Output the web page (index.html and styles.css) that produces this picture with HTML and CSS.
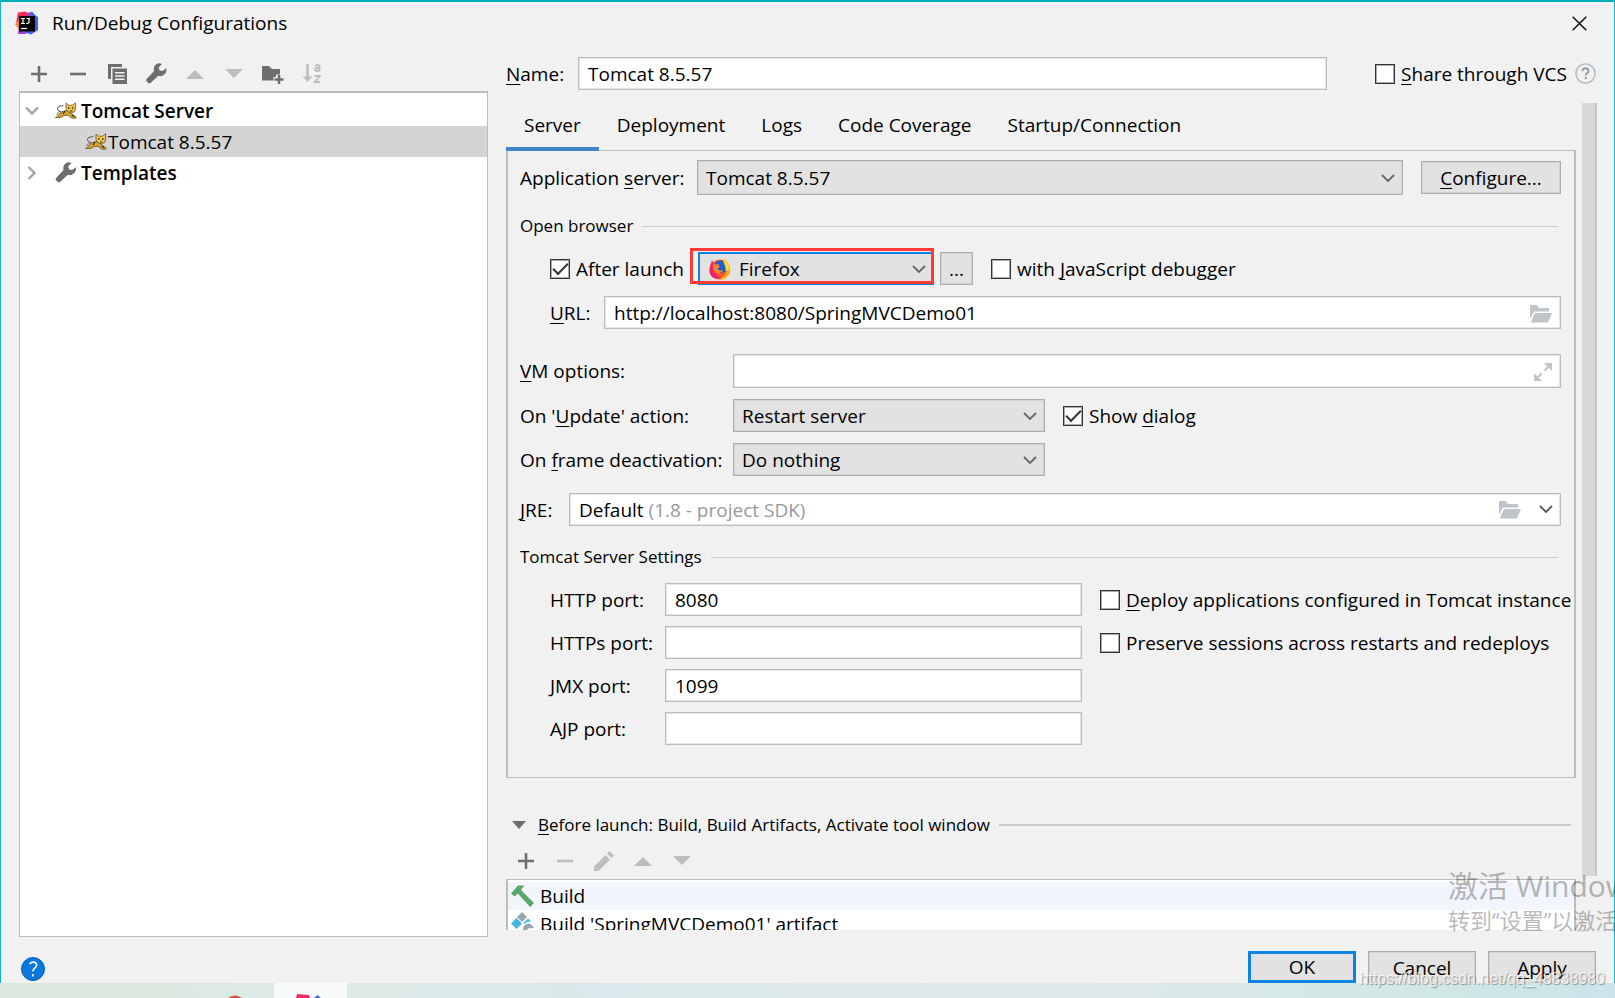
FILE: index.html
```
<!DOCTYPE html>
<html lang="en">
<head>
<meta charset="utf-8">
<title>Run/Debug Configurations</title>
<link rel="stylesheet" href="styles.css">
</head>
<body>
<svg class="defs" aria-hidden="true">
  <symbol id="plus" viewBox="0 0 16 16"><path d="M8 0v16M0 8h16" stroke="currentColor" stroke-width="2.600" fill="none"/></symbol>
  <symbol id="minus" viewBox="0 0 16 16"><path d="M0 8h16" stroke="currentColor" stroke-width="2.600" fill="none"/></symbol>
  <symbol id="up" viewBox="0 0 18 18"><path d="M9 5l9 9H0z" fill="currentColor"/></symbol>
  <symbol id="down" viewBox="0 0 18 18"><path d="M0 4h18l-9 9z" fill="currentColor"/></symbol>
  <symbol id="wrench" viewBox="0 0 21 21"><path d="M20.300 5.200L16.600 8l-3-.6-.9-3L15.900.900C12.700-.6 9.200 1 8.100 4.200c-.5 1.400-.4 2.700 0 3.900L.6 15.900c-.7.7-.7 1.600 0 2.300l1.700 1.800c.7.7 1.500.6 2.200 0l7.900-7.200c1.300.5 2.800.4 4.100-.1 3-1.300 4.700-4.500 3.800-7.500z" fill="currentColor"/></symbol>
  <symbol id="chev" viewBox="0 0 14 9"><path d="M1 1l6 6 6-6" stroke="currentColor" stroke-width="1.800" fill="none"/></symbol>
  <symbol id="folder" viewBox="0 0 22 18"><path d="M0 0h7l2 3h10v3.500H4L0 13.500z" fill="currentColor"/><path d="M4.800 8H22l-4 9.500H.8z" fill="currentColor"/></symbol>
  <symbol id="cat" viewBox="0 0 22 17">
    <path d="M.5 15.500c2-.5 3-3 5.500-5.500l5-1.500 4 1 1.500 2.500 4.500 3v1.200h-4l-4-3-4 .3-3 2H.5z" fill="#d2a33a" stroke="#5c430f" stroke-width=".7"/>
    <path d="M11 1l2.500 2.200h4L20.500.8l.2 5.200-1 3.500-3 1.500-4-1.500-1.700-3z" fill="#edc65a" stroke="#5c430f" stroke-width=".7"/>
    <path d="M6 9.500C1.500 8.500 2 5.500 4 4.500 6 3.500 8 4.500 8.500 2.800" fill="none" stroke="#4a4a4a" stroke-width="1"/>
    <path d="M13 5.500l1.500 1M18.500 5.500l-1.500 1M15 9h2.500M8 12l2-3M17 13l2 1.500" stroke="#33240a" stroke-width="1.200"/>
    <path d="M4.500 9L1.500 13" stroke="#555" stroke-width=".8"/>
  </symbol>
</svg>

<main class="dialog">
  <header class="titlebar">
    <svg class="logo" viewBox="0 0 24 24">
      <path d="M3 1.500L11 .5l3 4-4 8-9 1 1-7z" fill="#fb2a5c"/>
      <path d="M0 13l5-5 6 8-6 4z" fill="#fb8a1e"/>
      <path d="M3 23l1-9 9 3-2 6z" fill="#a73be0"/>
      <path d="M14 3l3-2.500L20 4l3 2v13l-7 4.500-6-2z" fill="#3f62e8"/>
      <path d="M12 2l4-1 2 4-5 2z" fill="#8950c8"/>
      <rect x="4" y="5" width="16" height="15.500" fill="#050505"/>
      <path d="M6 7.500h4M8 7.500v5M6 12.500h4M11.500 7.500H15M14 7.500v3.500q0 1.500-2.700 1.500" stroke="#fff" stroke-width="1.200" fill="none"/>
      <path d="M6 17.500h6" stroke="#fff" stroke-width="1.200"/>
    </svg>
    <h1>Run/Debug Configurations</h1>
    <button class="icon-btn close" aria-label="Close"><svg width="15" height="15" viewBox="0 0 15 15"><path d="M.7.7l13.600 13.600M14.300.7L.7 14.300" stroke="#111" stroke-width="1.500"/></svg></button>
  </header>

  <div class="content">
    <section class="left">
      <div class="toolbar">
        <button class="icon-btn" aria-label="Add"><svg width="16" height="16"><use href="#plus"/></svg></button>
        <button class="icon-btn" aria-label="Remove"><svg width="16" height="16"><use href="#minus"/></svg></button>
        <button class="icon-btn" aria-label="Copy"><svg width="19" height="20" viewBox="0 0 19 20"><path d="M0 0h14v3H3v12H0z" fill="currentColor"/><path d="M4.500 4.500H19V20H4.500zM7 8v1.500h9.500V8zm0 3.200v1.500h9.500v-1.500zm0 3.200v1.500h9.500v-1.500z" fill="currentColor" fill-rule="evenodd"/></svg></button>
        <button class="icon-btn" aria-label="Edit templates"><svg width="21" height="21"><use href="#wrench"/></svg></button>
        <button class="icon-btn off" aria-label="Move up"><svg width="18" height="18"><use href="#up"/></svg></button>
        <button class="icon-btn off" aria-label="Move down"><svg width="18" height="18"><use href="#down"/></svg></button>
        <button class="icon-btn" aria-label="New folder"><svg width="22" height="20" viewBox="0 0 22 20"><path d="M0 2h7l3 3h8v5.500h-4V13h-2.500v3.500H0z" fill="currentColor"/><path d="M17 11v9M12.500 15.500h9" stroke="currentColor" stroke-width="2.600"/></svg></button>
        <button class="icon-btn off" aria-label="Sort configurations"><svg width="20" height="21" viewBox="0 0 20 21"><path d="M.5 13.500h10l-5 5.500z" fill="currentColor"/><path d="M5.500 1v14" stroke="currentColor" stroke-width="2.600"/><path d="M13 2.800q4.500-2 4.500 1V8.500M17.500 5h-2.500q-2 0-2 1.500t2 1.500q2.500 0 2.500-2M12.800 13h5l-5 6h5.400" fill="none" stroke="currentColor" stroke-width="1.800"/></svg></button>
      </div>
      <ul class="tree">
        <li class="node"><svg class="arrow" width="14" height="10" viewBox="0 0 14 10"><path d="M1 1.500l6 6 6-6" stroke="currentColor" stroke-width="2.400" fill="none"/></svg><svg width="22" height="17"><use href="#cat"/></svg><b>Tomcat Server</b></li>
        <li class="node child selected"><svg width="22" height="17"><use href="#cat"/></svg><span>Tomcat 8.5.57</span></li>
        <li class="node"><svg class="arrow" width="10" height="14" viewBox="0 0 10 14"><path d="M1.500 1l6 6-6 6" stroke="currentColor" stroke-width="2.400" fill="none"/></svg><svg class="gray" width="22" height="21"><use href="#wrench"/></svg><b>Templates</b></li>
      </ul>
    </section>

    <section class="right">
      <div class="name-row">
        <label for="name"><u>N</u>ame:</label>
        <input id="name" class="field" type="text" value="Tomcat 8.5.57">
        <label class="check"><input type="checkbox"><span><u>S</u>hare through VCS</span></label>
        <button class="icon-btn hint" aria-label="About sharing"><svg width="21" height="21" viewBox="0 0 21 21"><circle cx="10.500" cy="10.500" r="9.600" fill="none" stroke="#aeb6bd" stroke-width="1.400"/><path d="M7.500 8.300q0-3 3-3t3 2.600c0 2-2.800 2.300-2.800 4.600M10.700 14v2.200" fill="none" stroke="#949ca3" stroke-width="1.900"/></svg></button>
      </div>

      <div class="scroller">
        <div class="pane">
          <nav class="tabs">
            <button class="tab active">Server</button>
            <button class="tab">Deployment</button>
            <button class="tab">Logs</button>
            <button class="tab">Code Coverage</button>
            <button class="tab">Startup/Connection</button>
          </nav>

          <div class="panel">
            <div class="row app-row">
              <label for="server">Application <u>s</u>erver:</label>
              <div class="select grow"><select id="server"><option>Tomcat 8.5.57</option></select><svg><use href="#chev"/></svg></div>
              <button class="btn configure"><span><u>C</u>onfigure...</span></button>
            </div>

            <h2 class="group">Open browser</h2>

            <div class="row launch-row indent">
              <label class="check"><input type="checkbox" checked><span>After launch</span></label>
              <div class="select browser">
                <select aria-label="Browser"><option>Firefox</option></select>
                <svg class="firefox" viewBox="0 0 22 22">
                  <circle cx="11" cy="11.500" r="10" fill="#ff5a26"/>
                  <path d="M4 18c4 2.500 10 2 12.500-1.500 3-4 2-10-2-16C19 3 21.500 8 21.300 12c-.4 6-5 9.700-10.300 9.700-3 0-5.500-1.500-7-3.700z" fill="#ffa81a"/>
                  <path d="M1.200 7L3.200 2l2 6c-1 6 2 10 8 11.500-5 3.500-14 .5-12.700-9z" fill="#f0246c"/>
                  <circle cx="11.500" cy="8.800" r="6.400" fill="#1b60cc"/>
                  <path d="M4 6l4 .5 1.800-1-.3 2.300 1.800 1-2.800 1.400c.5 2.500 3.500 2.800 5.500 1.500-1 4-6.500 4.500-9 1C4 10.500 3.500 8 4 6z" fill="#ff8426"/>
                  <path d="M14.500.5c-1.500 3.500 2.500 5.500 2.200 12.500L20.500 12c.5-5-2-9-6-11.500z" fill="#ffd83a"/>
                </svg>
                <svg><use href="#chev"/></svg>
                <div class="highlight"></div>
              </div>
              <button class="btn dots" aria-label="Browser settings">...</button>
              <label class="check"><input type="checkbox"><span>with <u>J</u>avaScript debugger</span></label>
            </div>

            <div class="row url-row indent">
              <label for="url"><u>U</u>RL:</label>
              <div class="field-box"><input id="url" class="field" type="text" value="http://localhost:8080/SpringMVCDemo01"><svg width="22" height="18"><use href="#folder"/></svg></div>
            </div>

            <div class="options">
              <label for="vm"><u>V</u>M options:</label>
              <div class="field-box vm"><input id="vm" class="field" type="text"><svg width="18" height="18" viewBox="0 0 18 18"><path d="M10 0h8v8zM0 10l8 8H0z" fill="currentColor"/><path d="M16 2l-5.500 5.500M2 16l5.500-5.500" stroke="currentColor" stroke-width="2.200"/></svg></div>
              <label for="update">On '<u>U</u>pdate' action:</label>
              <div class="cell">
                <div class="select mid"><select id="update"><option>Restart server</option></select><svg><use href="#chev"/></svg></div>
                <label class="check"><input type="checkbox" checked><span>Show <u>d</u>ialog</span></label>
              </div>
              <label for="frame">On <u>f</u>rame deactivation:</label>
              <div class="cell">
                <div class="select mid"><select id="frame"><option>Do nothing</option></select><svg><use href="#chev"/></svg></div>
              </div>
            </div>

            <div class="row jre-row">
              <label for="jre"><u>J</u>RE:</label>
              <button id="jre" class="field combo"><span>Default <em>(1.8 - project SDK)</em></span><svg class="pale" width="22" height="18"><use href="#folder"/></svg><svg width="14" height="9"><use href="#chev"/></svg></button>
            </div>

            <h2 class="group">Tomcat Server Settings</h2>

            <div class="ports indent">
              <label for="http">HTTP port:</label><input id="http" class="field" type="text" value="8080">
              <label class="check"><input type="checkbox"><span><u>D</u>eploy applications configured in Tomcat instance</span></label>
              <label for="https">HTTPs port:</label><input id="https" class="field" type="text">
              <label class="check"><input type="checkbox"><span>Preserve sessions across restarts and redeploys</span></label>
              <label for="jmx">JMX port:</label><input id="jmx" class="field" type="text" value="1099"><i></i>
              <label for="ajp">AJP port:</label><input id="ajp" class="field" type="text"><i></i>
            </div>
          </div>

          <h2 class="group before"><svg width="14" height="8" viewBox="0 0 14 8"><path d="M0 0h14L7 8z" fill="#6e6e6e"/></svg><span><u>B</u>efore launch: Build, Build Artifacts, Activate tool window</span></h2>
          <div class="toolbar tasks">
            <button class="icon-btn" aria-label="Add task"><svg width="16" height="16"><use href="#plus"/></svg></button>
            <button class="icon-btn off" aria-label="Remove task"><svg width="16" height="16"><use href="#minus"/></svg></button>
            <button class="icon-btn off" aria-label="Edit task"><svg width="20" height="20" viewBox="0 0 20 20"><path d="M0 15.500L11.500 4l4.500 4.500L4.500 20H0zM13 2.500L15.500 0 20 4.500 17.500 7z" fill="currentColor"/></svg></button>
            <button class="icon-btn off" aria-label="Move task up"><svg width="18" height="18"><use href="#up"/></svg></button>
            <button class="icon-btn off" aria-label="Move task down"><svg width="18" height="18"><use href="#down"/></svg></button>
          </div>
          <ul class="task-list">
            <li class="first"><svg width="24" height="22" viewBox="0 0 24 22"><path d="M0 8.500L7 .5h6.500L10 4.500l2.500 3L23 18l-3.800 4L9 11 7 8.500 3.500 11.500z" fill="#59a869"/></svg>Build</li>
            <li><svg width="24" height="24" viewBox="0 0 24 24"><path d="M11 0l5 5-5 5-5-5z" fill="#9aa7b0"/><path d="M5.500 6l5.500 5.500L5.500 17 0 11.500z" fill="#40b6e0"/><path d="M12.500 11L17 6.500l3.500 3.200q-4.500-.5-7 2.300z" fill="#40b6e0"/><path d="M12 20q-1-9 7-8.500l4 4-2 1q-5-2-6 5z" fill="#9aa7b0"/></svg>Build 'SpringMVCDemo01' artifact</li>
          </ul>
        </div>
        <div class="scrollbar"></div>
      </div>
    </section>
  </div>

  <footer class="footer">
    <button class="icon-btn help" aria-label="Help"><svg width="24" height="24" viewBox="0 0 24 24"><circle cx="12" cy="12" r="11.500" fill="#0a78dc" stroke="#0a5fae" stroke-width="1"/><path d="M8.800 7.300q.8-2.300 3.600-2.300 3.300.2 3.200 3.200c-.2 3-3.800 3-3.800 6.300M11.800 17v2.400" fill="none" stroke="#fff" stroke-width="1.600"/></svg></button>
    <div class="actions">
      <button class="btn primary">OK</button>
      <button class="btn">Cancel</button>
      <button class="btn"><span><u>A</u>pply</span></button>
    </div>
  </footer>
</main>

<div class="taskbar">
  <svg class="task-icon" width="14" height="3" viewBox="0 0 14 3"><path d="M0 3q7-5 14 0z" fill="#d2503f"/></svg>
  <div class="task-app"><svg width="26" height="4" viewBox="0 0 26 4"><path d="M1 0l12 1 1 3H0z" fill="#ee2f66"/><path d="M18 4l3.500-3L25 4z" fill="#4a68d8"/></svg></div>
</div>

<div class="activation" lang="zh"><p class="big">激活 Windows</p><p>转到“设置”以激活 Windows。</p></div>
<div class="credit">https://blog.csdn.net/qq_48838980</div>
</body>
</html>
```
FILE: styles.css
```
* { box-sizing: border-box; }

body {
  margin: 0;
  height: 100vh;
  display: flex;
  flex-direction: column;
  position: relative;
  overflow: hidden;
  color: #000;
  font: 19px/24px "Open Sans", "Noto Sans CJK SC", sans-serif;
}

button, input, select { font: inherit; color: inherit; margin: 0; border-radius: 0; }
h1, h2, p, ul { margin: 0; padding: 0; font-weight: 400; list-style: none; }
h1 { font-size: 19px; }
u { text-underline-offset: 3px; text-decoration-thickness: 1px; text-decoration-skip-ink: none; }
svg { flex: none; display: block; }
label { white-space: nowrap; flex: none; }
.defs { display: none; }

.dialog {
  flex: 1;
  min-height: 0;
  display: flex;
  flex-direction: column;
  overflow: hidden;
  background: #f1f1f1;
  border: 1px solid #14b4c0;
  border-top: 2px solid #00adb9;
  border-bottom: 0;
}

.titlebar { display: flex; align-items: center; height: 42px; padding: 0 21px 0 14px; }
.titlebar h1 { flex: 1; margin-left: 13px; }
.logo { width: 24px; height: 24px; }

.icon-btn {
  display: flex;
  align-items: center;
  justify-content: center;
  width: 24px;
  height: 24px;
  padding: 0;
  border: 0;
  background: none;
  color: #6e6e6e;
}
.icon-btn.off { color: #bdbdbd; }
.hint { margin-left: 6px; }
.close { width: 28px; }

.content { flex: 1; min-height: 0; display: grid; grid-template-columns: 469px minmax(0, 1fr); gap: 18px; padding: 0 17px 0 18px; }
.left { display: flex; flex-direction: column; }
.toolbar { display: flex; align-items: center; gap: 15px; height: 47px; padding: 12px 0 0 8px; }
.tree { flex: 1; border: 1px solid #bdbdbd; border-top-width: 2px; background: #fff; padding-top: 2px; }
.node { display: flex; align-items: center; height: 31px; padding-left: 5px; color: #000; }
.node svg { margin-right: 4px; }
.node .arrow { width: 14px; margin-right: 16px; color: #a3a3a3; }
.node .gray { color: #6e6e6e; }
.child { padding-left: 65px; }
.child svg { margin-right: 1px; }
.selected { background: #d4d4d4; }
.node b { font-weight: 600; }

.right { display: flex; flex-direction: column; min-width: 0; min-height: 0; padding-bottom: 7px; }
.name-row { display: flex; align-items: center; margin: 13px 0 13px; }
.name-row label:first-child { width: 72px; }
.name-row .field { flex: 1; margin-right: 48px; }

.field {
  width: 100%;
  height: 33px;
  min-width: 0;
  padding: 0 9px;
  border: 1px solid #bdbdbd;
  box-shadow: inset 0 0 0 1px #e6e6e6;
  background: #fff;
  outline: 0;
}
.field-box { position: relative; flex: 1; }
.field-box svg { position: absolute; right: 9px; top: 50%; margin-top: -8px; color: #bfc5ca; }
.field-box .field { display: block; }
.vm .field { height: 34px; }

.check { display: flex; align-items: center; gap: 6px; }
.check input {
  appearance: none;
  flex: none;
  width: 20px;
  height: 20px;
  border: 1px solid #333;
  box-shadow: inset 0 0 0 1px #aaa;
  background: #fff;
  display: grid;
  place-items: center;
}
.check input:checked::after {
  content: "";
  width: 13px;
  height: 6px;
  margin-bottom: 4px;
  border: solid #333;
  border-width: 0 0 2px 2px;
  transform: rotate(-45deg);
}

.scroller { flex: 1; min-height: 0; display: flex; gap: 6px; overflow: hidden; }
.pane { flex: 1; min-width: 0; }
.scrollbar { width: 15px; height: 773px; background: #d8d8d8; border-right: 2px solid #c6c6c6; }

.tabs { display: flex; position: relative; margin-bottom: -1px; }
.tab { height: 48px; padding: 0 18px; border: 0; border-bottom: 4px solid transparent; background: none; }
.tab.active { border-color: #4083c9; }

.panel { border: solid #bdbdbd; border-width: 1px 2px; padding: 9px 13px 32px 12px; }
.row { display: flex; align-items: center; }
.indent { margin-left: 30px; }

.select { position: relative; }
.select select {
  appearance: none;
  display: block;
  width: 100%;
  height: 33px;
  padding: 0 32px 0 8px;
  border: 1px solid #adadad;
  box-shadow: inset 0 0 0 1px #d2d2d2;
  background: #e2e2e2;
  outline: 0;
}
.select > svg { position: absolute; right: 8px; top: 50%; width: 14px; height: 9px; margin-top: -4px; color: #666; }
.grow { flex: 1; }
.app-row label { width: 177px; }
.app-row .select select { height: 35px; }

.btn { height: 33px; padding: 0 12px; border: 1px solid #adadad; box-shadow: inset 0 0 0 1px #d2d2d2; background: #e2e2e2; }
.configure { width: 140px; margin-left: 18px; }

.group { display: flex; align-items: center; gap: 9px; margin: 19px 3px 14px 0; font-size: 17px; }
.group::after { content: ""; flex: 1; height: 1px; background: #cbcbcb; }

.launch-row .check:first-child { width: 148px; }
.browser { width: 236px; }
.browser select { padding-left: 39px; border: 2px solid #0a84e0; box-shadow: none; }
.browser > .firefox { left: 11px; width: 22px; height: 22px; margin-top: -11px; }
.highlight { position: absolute; inset: -4px 0 1px -8px; border: 3px solid #ff3838; pointer-events: none; }
.dots { width: 33px; margin: 0 18px 0 6px; padding: 0; }

.url-row { margin-top: 11px; }
.url-row label { width: 54px; }

.options { display: grid; grid-template-columns: 213px minmax(0, 1fr); row-gap: 11px; align-items: center; margin-top: 25px; }
.cell { display: flex; gap: 18px; }
.mid { width: 312px; }

.jre-row { margin-top: 17px; }
.jre-row label { width: 49px; }
.combo { display: flex; align-items: center; gap: 18px; padding-right: 7px; text-align: left; color: #000; }
.combo span { flex: 1; }
.combo em { font-style: normal; color: #999; }
.combo svg { color: #555; }
.combo .pale { color: #bfc5ca; }

.ports { display: grid; grid-template-columns: 115px minmax(0, 417px) minmax(0, 1fr); gap: 10px 0; align-items: center; }
.ports .check { margin-left: 18px; }

.before { margin: 35px 5px 12px 6px; gap: 9px; }
.before svg { margin-right: 3px; }
.before::after { height: 2px; }
.tasks { height: 24px; padding-top: 0; margin-bottom: 6px; }
.task-list { border: solid #bdbdbd; border-width: 1px 2px; background: #fff; padding-top: 2px; }
.task-list li { display: flex; align-items: center; gap: 5px; height: 28px; padding-left: 3px; }
.task-list .first { background: #f2f5fb; }

.footer { display: flex; align-items: flex-start; justify-content: space-between; height: 46px; padding: 14px 18px 0 20px; }
.help { margin-top: 6px; }
.actions { display: flex; gap: 12px; }
.actions .btn { width: 108px; }
.actions .primary { height: 32px; border: 3px solid #0a84e0; box-shadow: none; }

.taskbar { display: flex; align-items: flex-start; height: 15px; background: linear-gradient(90deg, #dbe9dd, #dde9e6 20%, #d9e9ea 35%, #e0e8ea 65%, #cfe8e5 90%, #cbe3ea); }
.task-icon { margin: 12px 32px 0 228px; }
.task-app { width: 73px; height: 15px; padding: 11px 0 0 22px; background: #f9fbfa; }

/* overlay texts lie over the whole screen and run off its right edge */
.activation {
  position: absolute;
  right: 0;
  bottom: 61px;
  width: 167px;
  overflow: hidden;
  white-space: nowrap;
  color: #000;
  opacity: 0.27;
  font: 22px/34px "Open Sans", "Noto Sans CJK SC", sans-serif;
  pointer-events: none;
}
.activation .big { font-size: 30px; }
.credit {
  position: absolute;
  right: 10px;
  bottom: 9px;
  color: rgba(255, 255, 255, 0.75);
  text-shadow: 1px 1px 1px rgba(0, 0, 0, 0.35);
  font: 16px/20px "Liberation Sans", Arial, sans-serif;
  pointer-events: none;
}
```
